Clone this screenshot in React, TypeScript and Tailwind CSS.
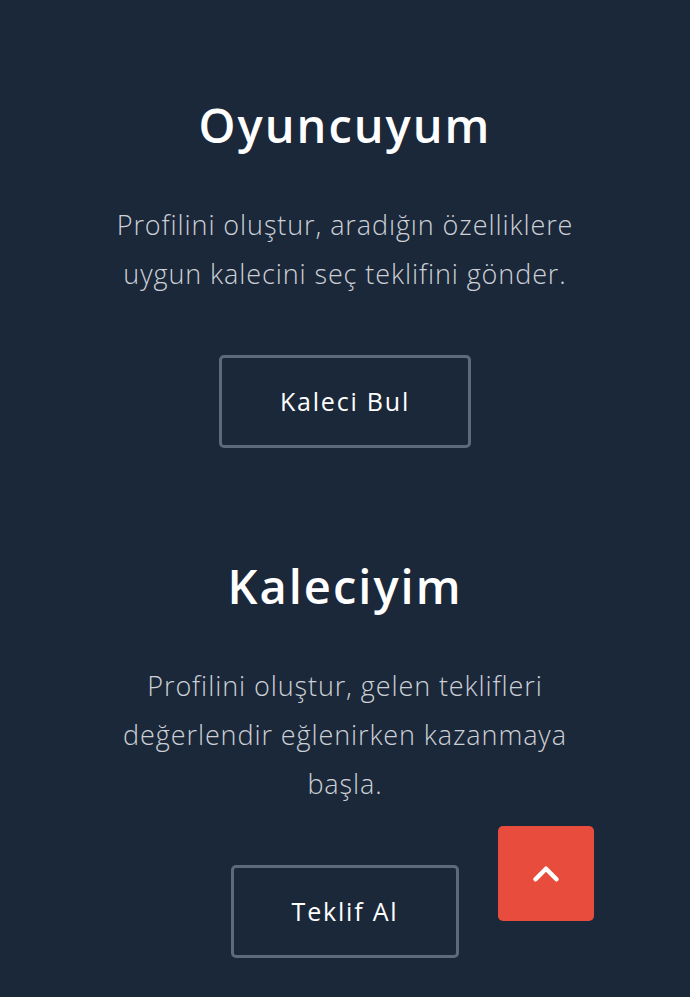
import { ChevronUp } from 'lucide-react';

const sections = [
  {
    title: "Oyuncuyum",
    lines: ["Profilini oluştur, aradığın özelliklere", "uygun kalecini seç teklifini gönder."],
    button: "Kaleci Bul",
  },
  {
    title: "Kaleciyim",
    lines: ["Profilini oluştur, gelen teklifleri", "değerlendir eğlenirken kazanmaya", "başla."],
    button: "Teklif Al",
  },
];

const App = () => {
  return (
    <div
      className="min-h-[997px] bg-[#1b283a] pt-[97px] pb-10"
      style={{ fontFamily: '"Open Sans", "Noto Sans", sans-serif' }}
    >
      {sections.map((section, i) => (
        <section key={section.title} className={`flex flex-col items-center text-center ${i > 0 ? 'mt-[110px]' : ''}`}>
          <h2 className="text-[47px] leading-[56px] font-semibold text-white tracking-[2px]">
            {section.title}
          </h2>

          <p className="mt-[47px] text-[27px] leading-[49px] font-light text-[#cdd0d6] tracking-[0.9px]">
            {section.lines.map((line) => (
              <span key={line} className="block">{line}</span>
            ))}
          </p>

          <button className="mt-[57px] h-[93px] px-[58px] border-[3px] border-[#5e6a7a] rounded-[5px] text-[25px] font-medium text-white tracking-[1.8px]">
            {section.button}
          </button>
        </section>
      ))}

      {/* Scroll to top */}
      <button className="fixed right-[96px] bottom-[76px] w-[96px] h-[95px] rounded-[5px] bg-[#e74c3c] flex items-center justify-center text-white">
        <ChevronUp size={42} strokeWidth={2.6} />
      </button>
    </div>
  );
};

export default App;
